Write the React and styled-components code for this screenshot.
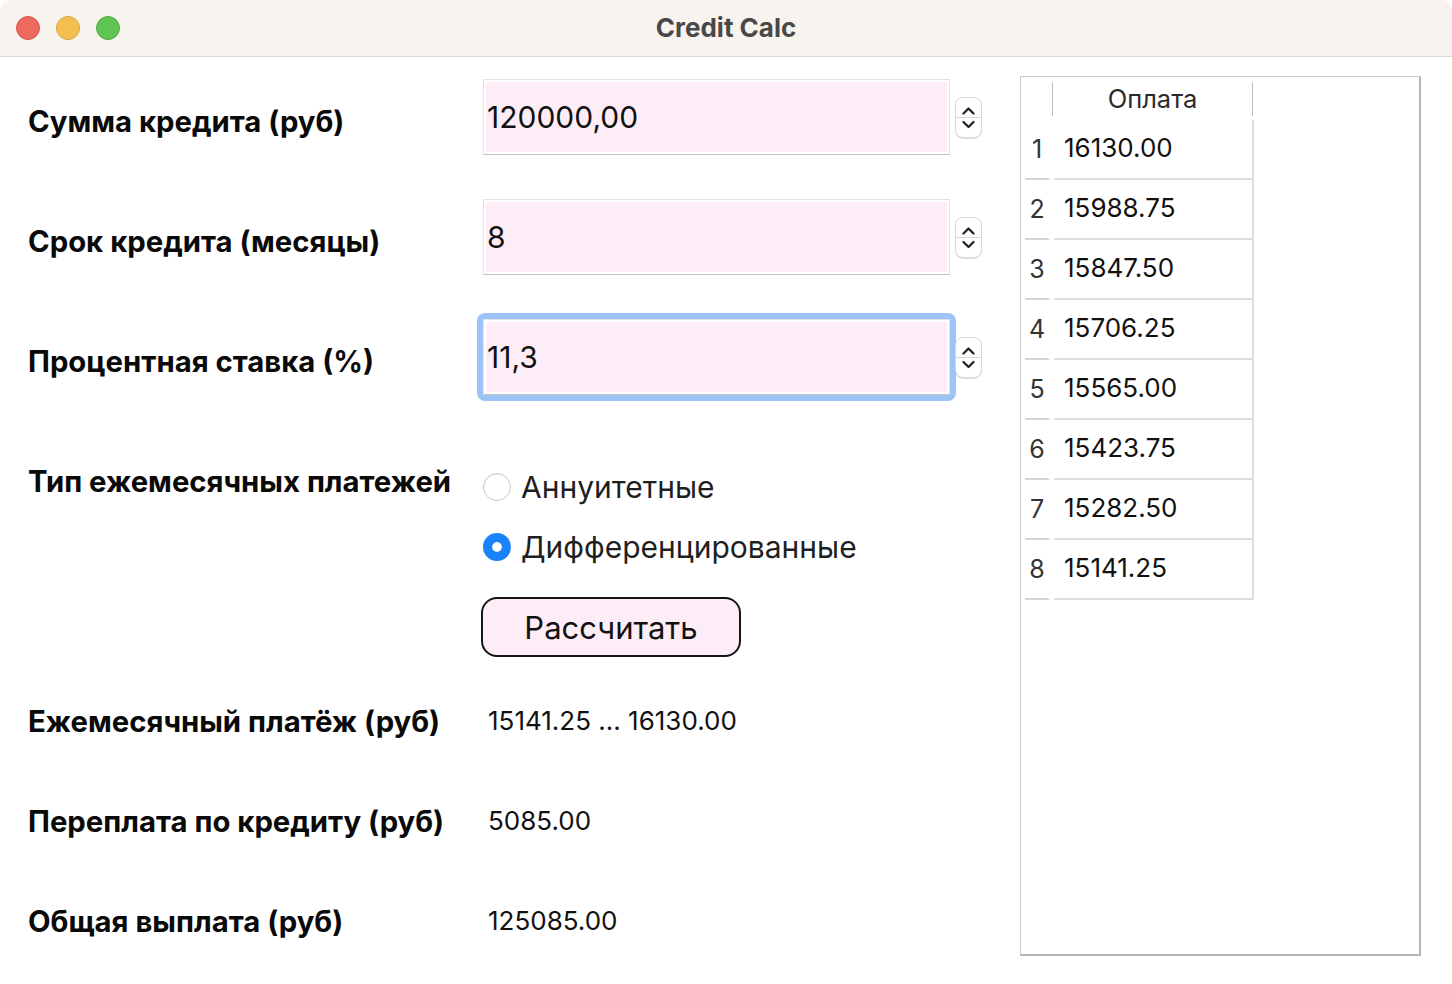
import styled, { createGlobalStyle } from 'styled-components';

const GlobalStyle = createGlobalStyle`
  html, body {
    margin: 0;
    padding: 0;
    background: #ffffff;
  }
  body {
    font-family: Inter, "Noto Sans", sans-serif;
    color: #111111;
  }
`;

const payments = ['16130.00', '15988.75', '15847.50', '15706.25', '15565.00', '15423.75', '15282.50', '15141.25'];

const results = [
    { label: 'Ежемесячный платёж (руб)', value: '15141.25 ... 16130.00' },
    { label: 'Переплата по кредиту (руб)', value: '5085.00' },
    { label: 'Общая выплата (руб)', value: '125085.00' },
];

function Spinner() {
    return (
        <Spin>
            <svg width="27" height="41" viewBox="0 0 27 41">
                <path d="M8.5 16.5 L13.5 11.5 L18.5 16.5" fill="none" stroke="#262626" strokeWidth="2.4" strokeLinecap="round" strokeLinejoin="round" />
                <line x1="1" y1="20.5" x2="26" y2="20.5" stroke="#d8d8d8" strokeWidth="1" />
                <path d="M8.5 25 L13.5 30 L18.5 25" fill="none" stroke="#262626" strokeWidth="2.4" strokeLinecap="round" strokeLinejoin="round" />
            </svg>
        </Spin>
    )
}

export default function App() {
    return (
        <Window>
            <GlobalStyle />
            <TitleBar>
                <Lights>
                    <Light color="#ee6a5f" edge="#d65a4f" />
                    <Light color="#f5bf4f" edge="#d9a43a" />
                    <Light color="#61c554" edge="#4fab43" />
                </Lights>
                <Title>Credit Calc</Title>
                <div />
            </TitleBar>
            <Body>
                <Form>
                    <InputRow>
                        <Label>Сумма кредита (руб)</Label>
                        <Field>
                            <Input defaultValue="120000,00" />
                        </Field>
                        <Spinner />
                    </InputRow>
                    <InputRow>
                        <Label>Срок кредита (месяцы)</Label>
                        <Field>
                            <Input defaultValue="8" />
                        </Field>
                        <Spinner />
                    </InputRow>
                    <InputRow>
                        <Label>Процентная ставка (%)</Label>
                        <Field focused>
                            <Input defaultValue="11,3" />
                        </Field>
                        <Spinner />
                    </InputRow>
                    <TypeRow>
                        <TypeLabel>Тип ежемесячных платежей</TypeLabel>
                        <Options>
                            <Option>
                                <Radio />
                                <span>Аннуитетные</span>
                            </Option>
                            <Option>
                                <Radio checked />
                                <span>Дифференцированные</span>
                            </Option>
                            <CalcButton>Рассчитать</CalcButton>
                        </Options>
                    </TypeRow>
                    <Results>
                        {results.map(r => (
                            <ResultRow key={r.label}>
                                <Label>{r.label}</Label>
                                <Value>{r.value}</Value>
                            </ResultRow>
                        ))}
                    </Results>
                </Form>
                <Table>
                    <HeadRow>
                        <Corner />
                        <HeadCell>Оплата</HeadCell>
                    </HeadRow>
                    {payments.map((p, i) => (
                        <Row key={i}>
                            <RowNum>{i + 1}</RowNum>
                            <Cell>{p}</Cell>
                        </Row>
                    ))}
                </Table>
            </Body>
        </Window>
    )
}

const Window = styled.div`
    width: 1452px;
    height: 984px;
    overflow: hidden;
    background: #ffffff;
    border-radius: 10px 10px 0 0;
`

const TitleBar = styled.div`
    height: 56px;
    background: #f7f3ef;
    border-bottom: 1px solid #dcd9d5;
    display: grid;
    grid-template-columns: 1fr auto 1fr;
    align-items: center;
`

const Lights = styled.div`
    display: flex;
    gap: 16px;
    padding-left: 16px;
`

const Light = styled.div`
    width: 24px;
    height: 24px;
    border-radius: 50%;
    box-sizing: border-box;
    background: ${props => props.color};
    border: 1px solid ${props => props.edge};
`

const Title = styled.div`
    font-size: 26px;
    font-weight: 700;
    color: #4a4847;
    margin-top: -2px;
`

const Body = styled.div`
    display: flex;
`

const Form = styled.div`
    width: 1020px;
    padding-left: 28px;
    box-sizing: border-box;
`

const Label = styled.div`
    font-size: 29.3px;
    font-weight: 700;
    line-height: 34px;
    color: #0a0a0a;
    padding-top: 10px;
    white-space: nowrap;
`

const InputRow = styled.div`
    height: 120px;
    display: grid;
    grid-template-columns: 455px 467px 27px;
    align-items: center;
`

const Field = styled.div`
    margin: -6px;
    padding: 6px;
    border-radius: 8px;
    background: ${props => props.focused ? "#9dc3f7" : "transparent"};
`

const Input = styled.input`
    display: block;
    width: 100%;
    height: 76px;
    box-sizing: border-box;
    border: 1px solid #e2e2e2;
    border-bottom-color: #c2c2c2;
    background: #feedf6;
    box-shadow: inset 0 0 0 2px #ffffff;
    padding: 0 0 0 3px;
    font-family: Inter, "Noto Sans", sans-serif;
    font-size: 30px;
    color: #111111;
    outline: none;
`

const Spin = styled.div`
    margin-left: 5px;
    width: 27px;
    height: 41px;
    box-sizing: border-box;
    border: 1px solid #dadada;
    border-radius: 8px;
    background: #ffffff;
    box-shadow: 0 1px 1px rgba(0, 0, 0, 0.12);
    overflow: hidden;

    svg {
        display: block;
        margin: -1px;
    }
`

const TypeRow = styled.div`
    display: grid;
    grid-template-columns: 455px 1fr;
    align-items: start;
`

const TypeLabel = styled(Label)`
    padding-top: 48px;
`

const Options = styled.div`
    padding-top: 40px;
    display: flex;
    flex-direction: column;
    align-items: flex-start;
`

const Option = styled.div`
    height: 60px;
    display: flex;
    align-items: center;
    gap: 10px;
    font-size: 30px;
    color: #1f1f1f;
`

const Radio = styled.div`
    width: 28px;
    height: 28px;
    box-sizing: border-box;
    border-radius: 50%;
    background: ${props => props.checked ? "#1a82fb" : "#ffffff"};
    border: ${props => props.checked ? "9px solid #1a82fb" : "1px solid #c8c8c8"};
    box-shadow: ${props => props.checked ? "inset 0 0 0 20px #ffffff" : "inset 0 1px 1px rgba(0,0,0,0.06)"};
    background-clip: padding-box;
`

const CalcButton = styled.button`
    margin-top: 20px;
    margin-left: -2px;
    width: 260px;
    height: 60px;
    box-sizing: border-box;
    border: 2px solid #151515;
    border-radius: 16px;
    background: #feedf6;
    font-family: Inter, "Noto Sans", sans-serif;
    font-size: 31px;
    color: #111111;
    padding: 0;
`

const Results = styled.div`
    margin-top: 10px;
`

const ResultRow = styled.div`
    height: 100px;
    display: grid;
    grid-template-columns: 460px 1fr;
    align-items: center;
`

const Value = styled.div`
    font-size: 26px;
    color: #111111;
    padding-top: 6px;
`

const Table = styled.div`
    margin-top: 19px;
    width: 401px;
    height: 880px;
    box-sizing: border-box;
    border-top: 1px solid #c9c9c9;
    border-left: 1px solid #c9c9c9;
    border-right: 2px solid #b5b5b5;
    border-bottom: 2px solid #b5b5b5;
    display: flex;
    flex-direction: column;
`

const HeadRow = styled.div`
    height: 43px;
    display: flex;
    align-items: center;
`

const Corner = styled.div`
    width: 31px;
    height: 34px;
    border-right: 1px solid #bdbdbd;
`

const HeadCell = styled.div`
    width: 199px;
    height: 34px;
    border-right: 1px solid #bdbdbd;
    text-align: center;
    font-size: 25.5px;
    line-height: 34px;
    color: #2a2a2a;
`

const Row = styled.div`
    height: 60px;
    display: flex;
    padding-left: 4px;
`

const RowNum = styled.div`
    width: 24px;
    height: 60px;
    box-sizing: border-box;
    border-bottom: 2px solid #d4d4d4;
    text-align: center;
    font-size: 25px;
    line-height: 58px;
    color: #333333;
`

const Cell = styled.div`
    margin-left: 5px;
    width: 200px;
    height: 60px;
    box-sizing: border-box;
    border-right: 2px solid #dedede;
    border-bottom: 2px solid #dedede;
    padding-left: 10px;
    font-size: 26px;
    line-height: 56px;
    color: #111111;
`
